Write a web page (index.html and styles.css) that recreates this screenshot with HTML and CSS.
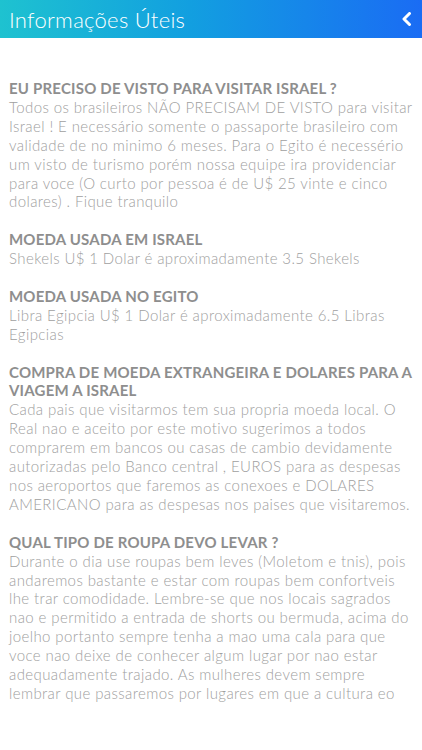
FILE: index.html
```html
<!DOCTYPE html>
<html lang="pt-BR">
<head>
    <meta charset="UTF-8">
    <meta name="viewport" content="width=device-width, initial-scale=1.0">
    <title>Informações Úteis</title>
    <link rel="stylesheet" href="styles.css">
</head>
<body>
    <header class="topbar">
        <h1>Informações Úteis</h1>
        <button class="back" aria-label="Voltar">
            <svg width="11" height="14" viewBox="0 0 11 14">
                <path d="M8.5 1.5 L3 7 L8.5 12.5" fill="none" stroke="#fff" stroke-width="3" stroke-linecap="round" stroke-linejoin="round"/>
            </svg>
        </button>
    </header>

    <main class="content">
        <section class="info">
            <h2>EU PRECISO DE VISTO PARA VISITAR ISRAEL ?</h2>
            <p>Todos os brasileiros NÃO PRECISAM DE VISTO para visitar Israel ! E necessário somente o passaporte brasileiro com validade de no minimo 6 meses. Para o Egito é necessério um visto de turismo porém nossa equipe ira providenciar para voce (O curto por pessoa é de U$ 25 vinte e cinco dolares) . Fique tranquilo</p>
        </section>
        <section class="info">
            <h2>MOEDA USADA EM ISRAEL</h2>
            <p>Shekels U$ 1 Dolar é aproximadamente 3.5 Shekels</p>
        </section>
        <section class="info">
            <h2>MOEDA USADA NO EGITO</h2>
            <p>Libra Egipcia U$ 1 Dolar é aproximadamente 6.5 Libras Egipcias</p>
        </section>
        <section class="info">
            <h2>COMPRA DE MOEDA EXTRANGEIRA E DOLARES PARA A VIAGEM A ISRAEL</h2>
            <p>Cada pais que visitarmos tem sua propria moeda local. O Real nao e aceito por este motivo sugerimos a todos comprarem em bancos ou casas de cambio devidamente autorizadas pelo Banco central , EUROS para as despesas nos aeroportos que faremos as conexoes e DOLARES AMERICANO para as despesas nos paises que visitaremos.</p>
        </section>
        <section class="info">
            <h2>QUAL TIPO DE ROUPA DEVO LEVAR ?</h2>
            <p>Durante o dia use roupas bem leves (Moletom e tnis), pois andaremos bastante e estar com roupas bem confortveis lhe trar comodidade. Lembre-se que nos locais sagrados nao e permitido a entrada de shorts ou bermuda, acima do joelho portanto sempre tenha a mao uma cala para que voce nao deixe de conhecer algum lugar por nao estar adequadamente trajado. As mulheres devem sempre lembrar que passaremos por lugares em que a cultura eo</p>
        </section>
    </main>
</body>
</html>
```

FILE: styles.css
```css
body {
    margin: 0;
    font-family: Lato, "Open Sans", sans-serif;
    background-color: #fff;
    height: 750px;
    overflow: hidden;
}
.topbar {
    height: 38px;
    display: flex;
    align-items: center;
    justify-content: space-between;
    padding: 0 9px;
    background: linear-gradient(90deg, #1ec2d0 0%, #129fe0 45%, #1a6cf4 100%);
}
.topbar h1 {
    margin: 0;
    color: #fff;
    font-size: 22px;
    font-weight: 300;
    letter-spacing: 0.3px;
}
.back {
    background: none;
    border: none;
    padding: 0;
    margin-right: 1px;
    display: flex;
    cursor: pointer;
}
.content {
    padding: 41px 9px 0;
}
.info {
    margin-bottom: 18.9px;
}
.info h2 {
    margin: 0;
    font-size: 15px;
    line-height: 18.9px;
    font-weight: 700;
    color: #8e8e8e;
    letter-spacing: 0.2px;
}
.info p {
    margin: 0;
    font-size: 15px;
    line-height: 18.9px;
    font-weight: 300;
    color: #a0a0a0;
    letter-spacing: 0.4px;
}
```
